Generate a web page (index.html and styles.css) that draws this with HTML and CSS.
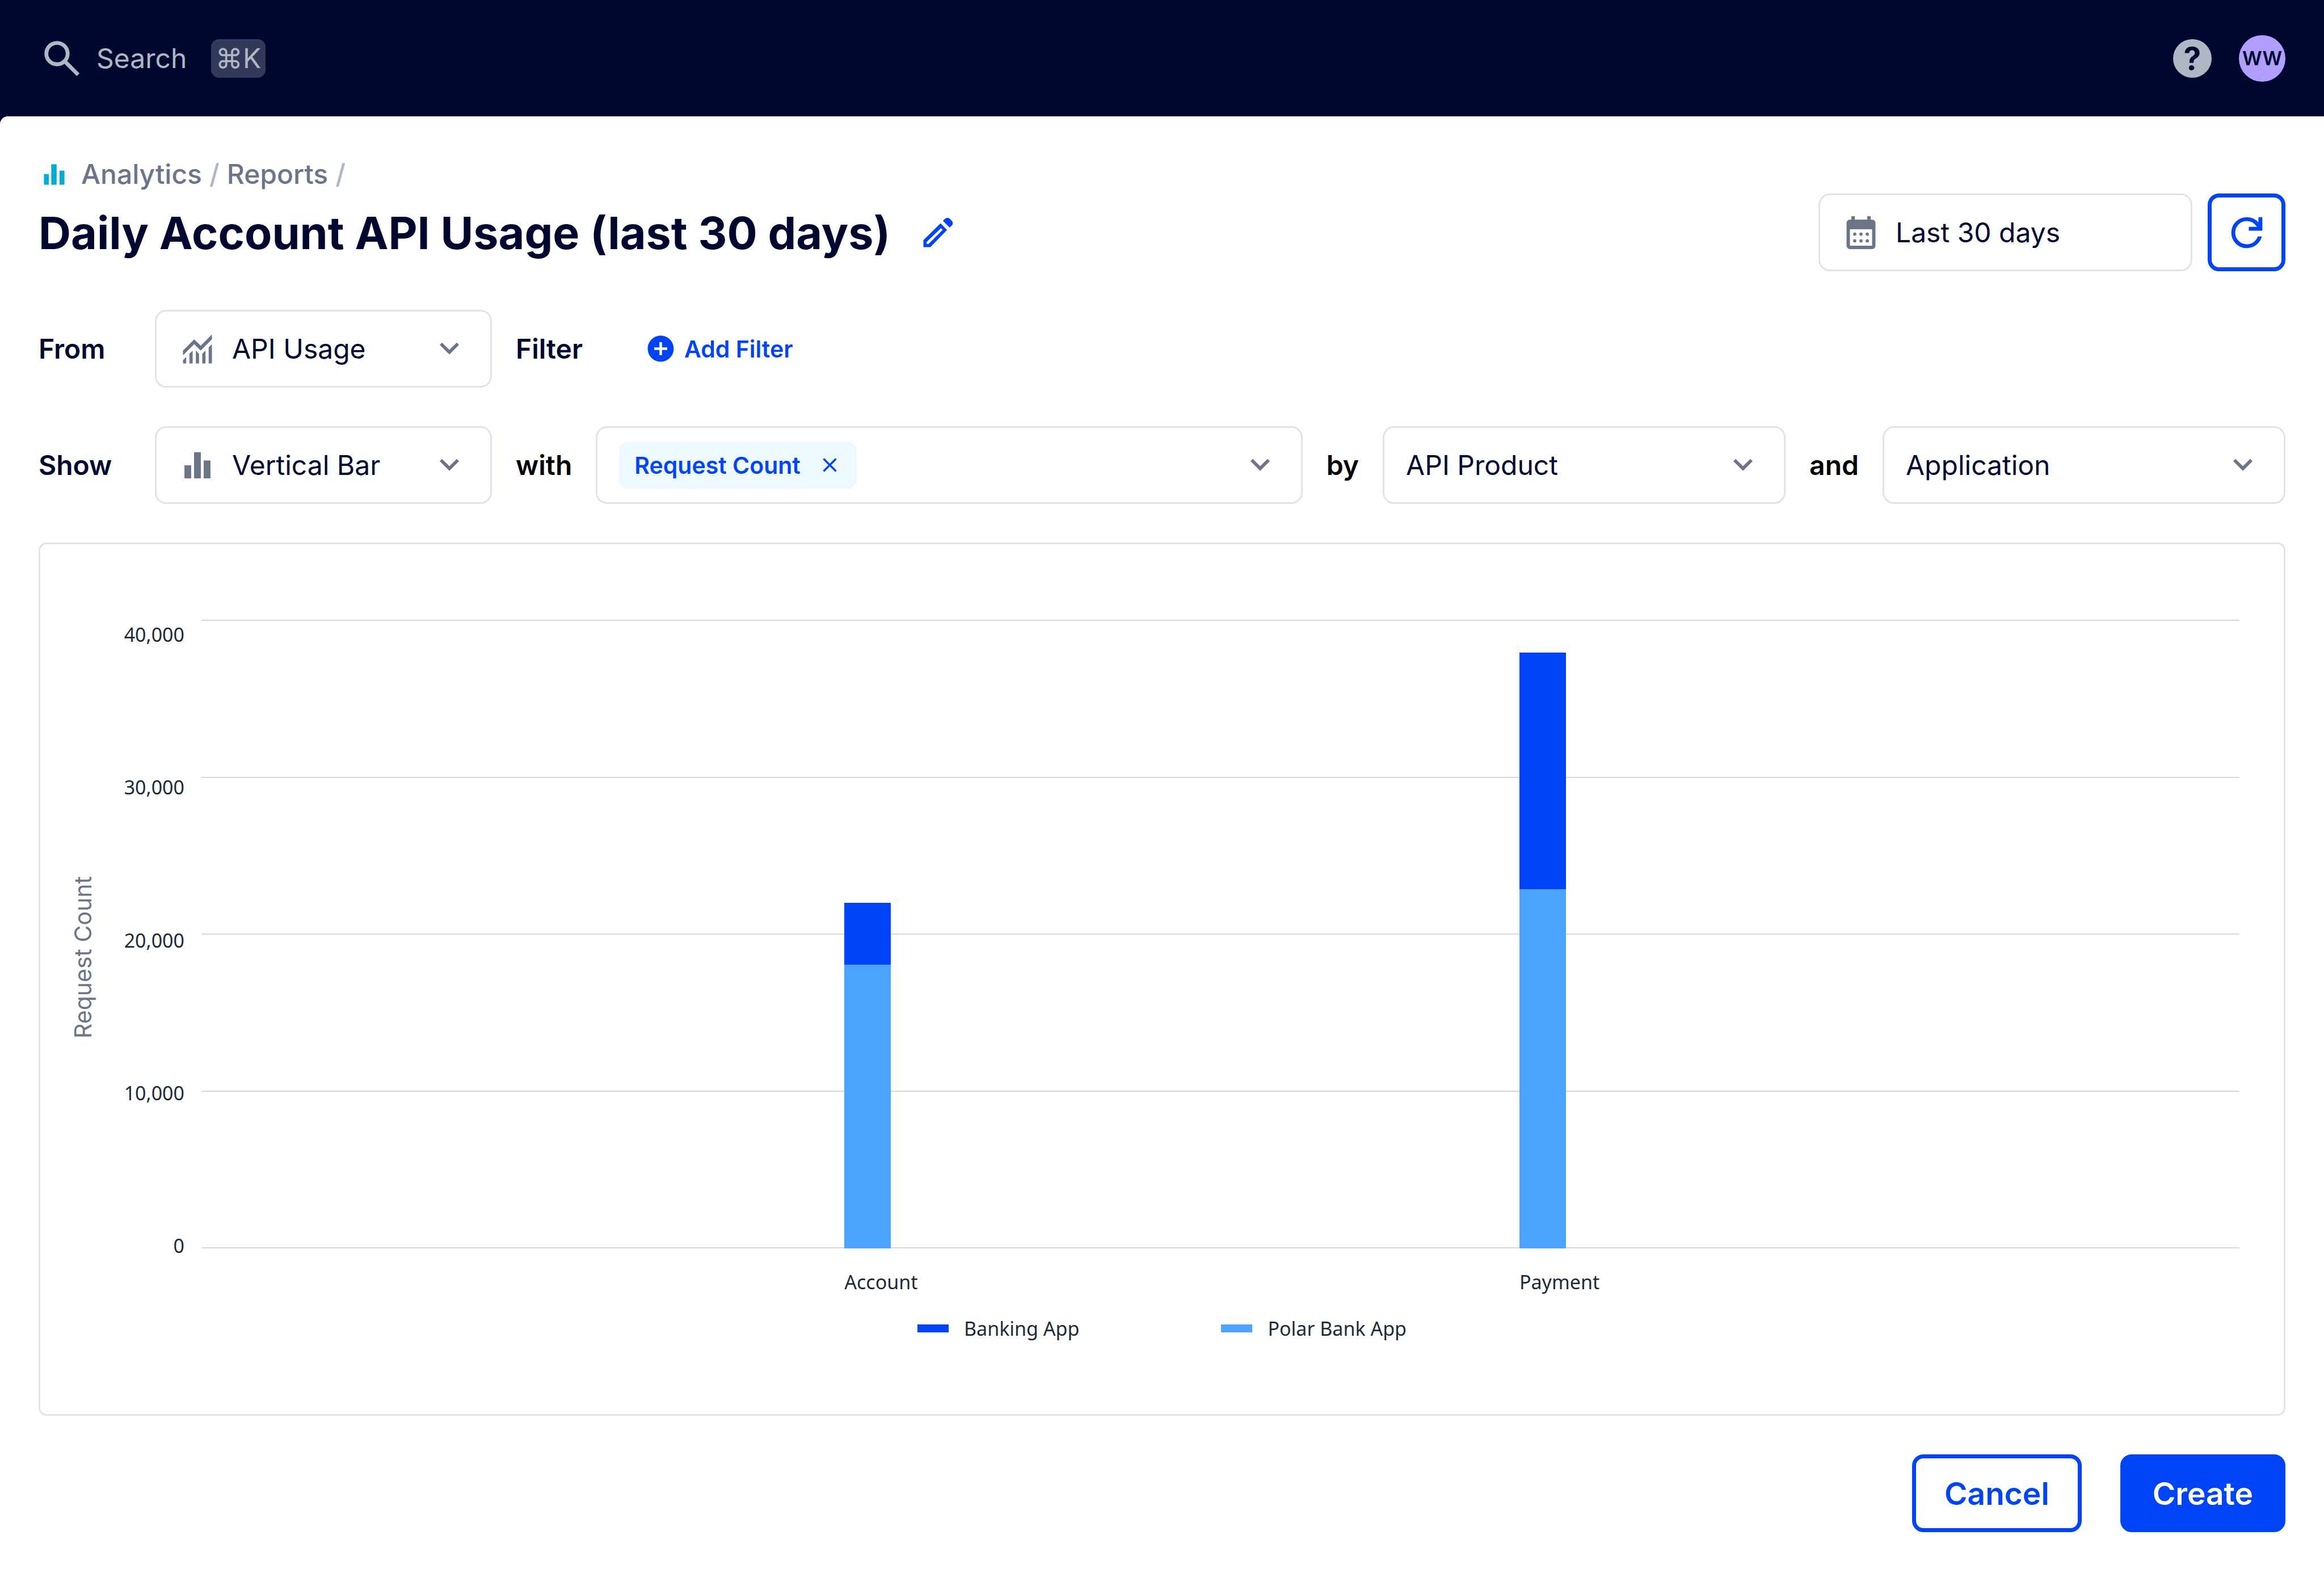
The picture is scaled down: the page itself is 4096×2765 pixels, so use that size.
FILE: index.html
```html
<!DOCTYPE html>
<html lang="en">
<head>
<meta charset="utf-8">
<title>Daily Account API Usage (last 30 days)</title>
<link rel="stylesheet" href="styles.css">
</head>
<body>
<header class="topbar">
  <label class="search">
    <svg class="icon-lg" viewBox="0 0 24 24" fill="none" stroke="currentColor" stroke-width="2" aria-hidden="true"><circle cx="9.5" cy="9.5" r="5.5"/><path d="M13.4 13.4 20.4 20.4"/></svg>
    <input class="search-input" type="text" placeholder="Search" aria-label="Search">
    <kbd class="shortcut">⌘K</kbd>
  </label>
  <div class="account">
    <button class="help" type="button" aria-label="Help">?</button>
    <button class="avatar" type="button" aria-label="Account">WW</button>
  </div>
</header>

<main class="page">
  <nav class="breadcrumbs" aria-label="Breadcrumb">
    <svg class="crumb-icon" viewBox="0 0 64 64" fill="currentColor" aria-hidden="true"><path d="M11 31h10v22H11zM26 11h11v42H26zM43 24h10v29H43z"/></svg>
    <a class="crumb" href="#">Analytics</a><span class="slash">/</span>
    <a class="crumb" href="#">Reports</a><span class="slash">/</span>
  </nav>

  <div class="title-row">
    <h1 class="title">Daily Account API Usage (last 30 days)</h1>
    <button class="edit" type="button" aria-label="Edit title">
      <svg class="icon" viewBox="0 0 80 80" fill="currentColor" aria-hidden="true"><path fill-rule="evenodd" d="M10 55.500 45.500 20.500 59 34.500 24.500 70H10zM16.500 59.500V63.500H20.500L50 34 46.500 30.500z"/><path d="M50.500 15.500 54.500 11.500Q59.500 7 64.500 11L69 15.500Q73 20.500 69 25L64.500 29.500z"/></svg>
    </button>
    <label class="field field-date">
      <svg class="icon" viewBox="0 0 80 80" aria-hidden="true"><path fill="currentColor" fill-rule="evenodd" d="M20 6h7v7h26V6h7v7h3a7 7 0 0 1 7 7v47a7 7 0 0 1-7 7H17a7 7 0 0 1-7-7V20a7 7 0 0 1 7-7h3zM17 33v34h46V33z"/><g fill="currentColor"><circle cx="27" cy="43" r="3.4"/><circle cx="40" cy="43" r="3.4"/><circle cx="53" cy="43" r="3.4"/><circle cx="27" cy="57" r="3.4"/><circle cx="40" cy="57" r="3.4"/><circle cx="53" cy="57" r="3.4"/></g></svg>
      <input class="control" type="text" value="Last 30 days" aria-label="Date range">
    </label>
    <button class="refresh" type="button" aria-label="Refresh">
      <svg class="icon-lg" viewBox="0 0 24 24" fill="currentColor" aria-hidden="true"><path d="M12 20q-3.35 0-5.675-2.325T4 12t2.325-5.675T12 4q1.725 0 3.3.713T18 6.75V4h2v7h-7V9h4.2q-.8-1.4-2.187-2.2T12 6Q9.5 6 7.75 7.75T6 12t1.75 4.25T12 18q1.925 0 3.475-1.1T17.65 14h2.1q-.7 2.65-2.85 4.325T12 20"/></svg>
    </button>
  </div>

  <div class="query-row">
    <label class="label label-lead" for="source">From</label>
    <div class="field field-kind">
      <svg class="icon" viewBox="0 0 80 80" fill="currentColor" aria-hidden="true"><path d="M10 43.300 33.300 20 46.700 33.300 70 10V20L46.700 43.300 33.300 30 10 53.300zM10 63.300l6.700-6.700V70H10zM23.300 50l6.700-6.700V70h-6.700zM36.700 43.300l6.600 6.700V70h-6.600zM50 50l6.700-6.700V70H50zM63.300 36.700l6.700-6.700V70h-6.700z"/></svg>
      <select class="control" id="source"><option>API Usage</option></select>
      <svg class="icon" viewBox="0 .6 24 24" fill="currentColor" aria-hidden="true"><path d="M16.59 8.59 12 13.17 7.41 8.59 6 10l6 6 6-6z"/></svg>
    </div>
    <span class="label label-filter">Filter</span>
    <button class="add-filter" type="button">
      <svg class="icon-sm" viewBox="0 0 24 24" fill="currentColor" aria-hidden="true"><path d="M12 2C6.48 2 2 6.48 2 12s4.48 10 10 10 10-4.48 10-10S17.52 2 12 2zm5 11h-4v4h-2v-4H7v-2h4V7h2v4h4v2z"/></svg>
      Add Filter
    </button>
  </div>

  <div class="query-row">
    <label class="label label-lead" for="chart-type">Show</label>
    <div class="field field-kind">
      <svg class="icon" viewBox="0 0 80 80" fill="currentColor" aria-hidden="true"><path d="M13 40h14v27H13zM33 13h14v54H33zM53 30h14v37H53z"/></svg>
      <select class="control" id="chart-type"><option>Vertical Bar</option></select>
      <svg class="icon" viewBox="0 .6 24 24" fill="currentColor" aria-hidden="true"><path d="M16.59 8.59 12 13.17 7.41 8.59 6 10l6 6 6-6z"/></svg>
    </div>
    <label class="label label-plain" for="metrics">with</label>
    <div class="field field-metrics">
      <span class="chip">Request Count
        <button class="chip-remove" type="button" aria-label="Remove Request Count"><svg class="icon-x" viewBox="0 0 32 32" fill="none" stroke="currentColor" stroke-width="4" aria-hidden="true"><path d="M3 3 29 29M29 3 3 29"/></svg></button>
      </span>
      <select class="control" id="metrics"><option label=" "></option></select>
      <svg class="icon" viewBox="0 .6 24 24" fill="currentColor" aria-hidden="true"><path d="M16.59 8.59 12 13.17 7.41 8.59 6 10l6 6 6-6z"/></svg>
    </div>
    <label class="label label-plain" for="group-one">by</label>
    <div class="field field-group">
      <select class="control" id="group-one"><option>API Product</option></select>
      <svg class="icon" viewBox="0 .6 24 24" fill="currentColor" aria-hidden="true"><path d="M16.59 8.59 12 13.17 7.41 8.59 6 10l6 6 6-6z"/></svg>
    </div>
    <label class="label label-plain" for="group-two">and</label>
    <div class="field field-group">
      <select class="control" id="group-two"><option>Application</option></select>
      <svg class="icon" viewBox="0 .6 24 24" fill="currentColor" aria-hidden="true"><path d="M16.59 8.59 12 13.17 7.41 8.59 6 10l6 6 6-6z"/></svg>
    </div>
  </div>

  <section class="chart" aria-label="Request count by API product and application">
    <div class="chart-body">
      <div class="axis-title">Request Count</div>
      <div class="ticks">
        <span>40,000</span><span>30,000</span><span>20,000</span><span>10,000</span><span>0</span>
      </div>
      <div class="plot">
        <div class="gridlines"><i></i><i></i><i></i><i></i><i></i></div>
        <div class="bars">
          <div class="bar bar-account">
            <div class="seg seg-banking" style="height: 9.9%"></div>
            <div class="seg seg-polar" style="height: 45.1%"></div>
          </div>
          <div class="bar bar-payment">
            <div class="seg seg-banking" style="height: 37.7%"></div>
            <div class="seg seg-polar" style="height: 57.1%"></div>
          </div>
        </div>
      </div>
      <div class="categories">
        <span class="bar-account">Account</span>
        <span class="bar-payment">Payment</span>
      </div>
    </div>
    <ul class="legend">
      <li class="legend-item"><span class="swatch seg-banking"></span>Banking App</li>
      <li class="legend-item"><span class="swatch seg-polar"></span>Polar Bank App</li>
    </ul>
  </section>

  <div class="actions">
    <button class="btn btn-outline" type="button">Cancel</button>
    <button class="btn btn-solid" type="button">Create</button>
  </div>
</main>
</body>
</html>
```
FILE: styles.css
```css
:root {
  --navy: #000830;
  --blue: #0044f7;
  --sky: #4ca4ff;
  --slate: #6c7489;
  --mist: #afb7c5;
  --line: #dfe3eb;
}

*,
*::before,
*::after {
  box-sizing: border-box;
}

body {
  margin: 0;
  min-height: 100vh;
  display: flex;
  flex-direction: column;
  background: var(--navy);
  color: var(--navy);
  font-family: Inter, "Liberation Sans", sans-serif;
  font-size: 48px;
  line-height: 68px;
}

button,
input,
select {
  margin: 0;
  padding: 0;
  border: 0;
  background: none;
  color: inherit;
  font: inherit;
}

svg {
  display: block;
  flex: none;
}

.icon-lg {
  width: 82px;
  height: 82px;
}

.icon {
  width: 68px;
  height: 68px;
  color: var(--slate);
}

.icon-sm {
  width: 55px;
  height: 55px;
}

.icon-x {
  width: 27px;
  height: 27px;
}

/* Top bar */

.topbar {
  height: 205px;
  padding: 0 68px;
  display: flex;
  align-items: center;
  justify-content: space-between;
  color: var(--mist);
}

.search {
  display: flex;
  align-items: center;
}

.search-input {
  width: 202px;
  margin-left: 20px;
}

.search-input::placeholder {
  color: var(--mist);
  opacity: 1;
}

.shortcut {
  width: 96px;
  border-radius: 14px;
  background: rgba(255, 255, 255, 0.2);
  font-family: inherit;
  text-align: center;
}

.account {
  display: flex;
  align-items: center;
  gap: 48px;
}

.help,
.avatar {
  border-radius: 50%;
  color: var(--navy);
  text-align: center;
}

.help {
  width: 68px;
  height: 68px;
  background: var(--mist);
  font-size: 55px;
  font-weight: 700;
}

.avatar {
  width: 82px;
  height: 82px;
  background: #b29eff;
  font-size: 34px;
  font-weight: 600;
}

/* Page */

.page {
  flex: 1;
  display: flex;
  flex-direction: column;
  gap: 68px;
  padding: 68px 68px 65px;
  border-radius: 14px 0 0 0;
  background: #fff;
}

.breadcrumbs {
  display: flex;
  align-items: center;
  margin-bottom: -68px;
  color: var(--slate);
  font-weight: 500;
}

.crumb-icon {
  width: 55px;
  height: 55px;
  margin-right: 20px;
  color: #00acd2;
}

.crumb {
  color: inherit;
  text-decoration: none;
}

.slash {
  margin: 0 13px;
  color: var(--mist);
}

.title-row {
  display: flex;
  align-items: center;
}

.title {
  margin: 0;
  font-size: 79px;
  font-weight: 700;
  line-height: 136px;
}

.edit {
  margin: 0 auto 0 50px;
}

.edit .icon {
  color: var(--blue);
}

.refresh {
  width: 137px;
  height: 137px;
  margin-left: 27px;
  display: flex;
  align-items: center;
  justify-content: center;
  border: 7px solid var(--blue);
  border-radius: 20px;
  color: var(--blue);
}

/* Query builder */

.query-row {
  display: flex;
  align-items: center;
  gap: 42px;
}

.field {
  height: 137px;
  padding: 0 38px;
  display: flex;
  align-items: center;
  gap: 27px;
  border: 3px solid var(--line);
  border-radius: 20px;
}

.control {
  flex: 1;
  min-width: 0;
  height: 68px;
  appearance: none;
}

.field-date {
  width: 659px;
}

.field-kind {
  width: 594px;
}

.field-metrics {
  flex: 1;
}

.field-group {
  width: 710px;
}

.label {
  font-weight: 600;
}

.label-lead {
  width: 163px;
}

.label-filter {
  width: 186px;
}

.label-plain {
  color: #000;
}

.add-filter {
  display: flex;
  align-items: center;
  gap: 14px;
  color: var(--blue);
  font-size: 41px;
  font-weight: 600;
}

.chip {
  height: 82px;
  padding: 0 34px 0 27px;
  display: flex;
  align-items: center;
  gap: 38px;
  border-radius: 14px;
  background: #edf9ff;
  color: var(--blue);
  font-size: 41px;
  font-weight: 600;
}

/* Chart */

.chart {
  flex: 1;
  display: flex;
  flex-direction: column;
  padding: 133px 0 127px;
  border: 3px solid var(--line);
  border-radius: 14px;
  color: #1c2b36;
  font-family: "Noto Sans", "Open Sans", sans-serif;
  font-size: 34px;
  line-height: 48px;
}

.chart-body {
  flex: 1;
  display: grid;
  grid-template-columns: 48px 125px 1fr;
  grid-template-rows: 1fr auto;
  column-gap: 30px;
  row-gap: 35px;
  padding: 0 78px 0 51px;
}

.axis-title {
  grid-row: 1 / 3;
  writing-mode: vertical-rl;
  transform: rotate(180deg);
  text-align: center;
  color: var(--slate);
  font-family: Inter, sans-serif;
  font-size: 41px;
}

/* Tick labels hang slightly below their gridlines */
.ticks {
  margin: 2px 0 -19px;
  display: flex;
  flex-direction: column;
  justify-content: space-between;
  text-align: right;
}

.plot {
  display: grid;
}

.gridlines,
.bars {
  grid-area: 1 / 1;
}

.gridlines {
  display: flex;
  flex-direction: column;
  justify-content: space-between;
}

.gridlines i {
  height: 2px;
  background: #d8d8d8;
}

.bars,
.categories {
  display: grid;
  grid-template-columns: 1328fr 82px 1298fr 82px 1391fr;
}

.categories {
  grid-column: 3;
  white-space: nowrap;
}

.bar-account {
  grid-column: 2;
}

.bar-payment {
  grid-column: 4;
}

.bar {
  display: flex;
  flex-direction: column;
  justify-content: flex-end;
}

.seg-banking {
  background: var(--blue);
}

.seg-polar {
  background: var(--sky);
}

.legend {
  margin: 34px 0 0;
  padding: 0;
  display: flex;
  justify-content: center;
  gap: 250px;
  list-style: none;
}

.legend-item {
  display: flex;
  align-items: center;
  gap: 27px;
}

.swatch {
  width: 55px;
  height: 14px;
}

/* Footer actions */

.actions {
  display: flex;
  justify-content: flex-end;
  gap: 68px;
}

.btn {
  height: 137px;
  padding: 0 50px;
  border: 7px solid var(--blue);
  border-radius: 20px;
  color: var(--blue);
  font-size: 55px;
  font-weight: 600;
}

.btn-solid {
  background: var(--blue);
  color: #fff;
}
```
